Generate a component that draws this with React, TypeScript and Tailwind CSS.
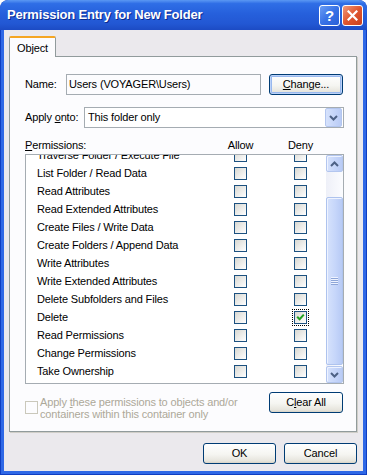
import React from "react";

const rows = [
  "Traverse Folder / Execute File",
  "List Folder / Read Data",
  "Read Attributes",
  "Read Extended Attributes",
  "Create Files / Write Data",
  "Create Folders / Append Data",
  "Write Attributes",
  "Write Extended Attributes",
  "Delete Subfolders and Files",
  "Delete",
  "Read Permissions",
  "Change Permissions",
  "Take Ownership",
];

function Box({ checked = false, focus = false }: { checked?: boolean; focus?: boolean }) {
  return (
    <span
      className={
        "relative flex h-[13px] w-[13px] items-center justify-center border border-[#1c5180] bg-[linear-gradient(135deg,#d8d8d2,#ffffff)] " +
        (focus ? "outline-1 outline-offset-1 outline-dotted outline-black" : "")
      }
    >
      {checked && (
        <svg width="9" height="8" viewBox="0 0 9 8">
          <path d="M1.2 3.8 L3.6 6.2 L7.8 1.6" fill="none" stroke="#21a121" strokeWidth="2" />
        </svg>
      )}
    </span>
  );
}

function XPButton({ children, className = "", def = false }: { children: React.ReactNode; className?: string; def?: boolean }) {
  return (
    <div
      className={
        "flex h-[21px] items-center justify-center rounded-[3px] border border-[#003c74] bg-[linear-gradient(#ffffff,#f5f5f1_55%,#e6e4dc_90%,#d6d2c6)] text-[11px] text-black " +
        (def ? "shadow-[inset_0_0_0_1px_#bcd2f8,inset_0_0_0_2px_#98b8ee] " : "") +
        className
      }
    >
      {children}
    </div>
  );
}

function Chevron({ up = false }: { up?: boolean }) {
  return (
    <svg width="9" height="6" viewBox="0 0 9 6">
      <path
        d={up ? "M1 5 L4.5 1.5 L8 5" : "M1 1 L4.5 4.5 L8 1"}
        fill="none"
        stroke="#4d6185"
        strokeWidth="2"
      />
    </svg>
  );
}

function ScrollBtn({ up = false }: { up?: boolean }) {
  return (
    <div className="flex h-[17px] w-[17px] items-center justify-center rounded-[2px] border border-[#b3c6ef] bg-[linear-gradient(to_right,#d6e2fc,#c4d4f9_60%,#b9cbf5)] shadow-[inset_1px_1px_0_#eef3ff]">
      <Chevron up={up} />
    </div>
  );
}

export default function App() {
  return (
    <div className="flex h-[475px] w-[367px] flex-col overflow-hidden rounded-t-[8px] bg-[#0f3ec2] font-['Liberation_Sans',Arial,sans-serif] text-[11px] tracking-[-0.15px] text-black">
      {/* Title bar */}
      <div className="flex h-[30px] items-center rounded-t-[8px] bg-[linear-gradient(#5b98f3,#2f6ee6_12%,#2660dc_45%,#2257d3_80%,#1c4bc4)] pl-[7px] pr-[4px]">
        <span className="flex-1 text-[13px] font-bold tracking-[-0.2px] text-white [text-shadow:1px_1px_#0b2a8f]">
          Permission Entry for New Folder
        </span>
        <div className="flex h-[21px] w-[21px] items-center justify-center rounded-[3px] border border-white bg-[linear-gradient(135deg,#6a9df4,#3872e6_50%,#2a5fd8)] text-[15px] font-bold leading-none text-white">
          ?
        </div>
        <div className="ml-[2px] flex h-[21px] w-[21px] items-center justify-center rounded-[3px] border border-white bg-[linear-gradient(135deg,#f09a7c,#e0562f_50%,#c8401f)]">
          <svg width="11" height="11" viewBox="0 0 11 11">
            <path d="M1.5 1.5 L9.5 9.5 M9.5 1.5 L1.5 9.5" stroke="white" strokeWidth="2.2" strokeLinecap="square" />
          </svg>
        </div>
      </div>

      {/* Body */}
      <div className="mx-px mb-px flex flex-1 flex-col border-x-[3px] border-b-[3px] border-[#2f68e6] bg-[#ebe9ed] pl-[5px] pt-[6px]">
        {/* Tab row */}
        <div className="flex h-[20px]">
          <div className="relative z-10 flex h-[21px] w-[47px] items-center justify-center rounded-t-[2px] border-x border-[#919b9c] border-t-[2px] border-t-[#f5a623] bg-[#fcfcfe] pt-px">
            Object
          </div>
        </div>

        {/* Panel */}
        <div className="flex h-[376px] w-[348px] flex-col border border-[#919b9c] bg-[#fcfcfe] pl-[15px] pr-[12px] pt-[17px] shadow-[1px_1px_0_#d0cec8]">
          {/* Name row */}
          <div className="flex h-[21px] items-center">
            <span className="w-[41px]">Name:</span>
            <div className="flex h-[21px] w-[195px] items-center border border-[#a5acb2] bg-[#fcfcfe] pl-[2px]">
              Users (VOYAGER\Users)
            </div>
            <XPButton def className="ml-[8px] w-[74px]">
              <span>
                <span className="underline">C</span>hange...
              </span>
            </XPButton>
          </div>

          {/* Apply onto row */}
          <div className="mt-[12px] flex h-[21px] items-center">
            <span className="w-[59px]">
              Apply <span className="underline">o</span>nto:
            </span>
            <div className="flex h-[21px] flex-1 items-center border border-[#a5acb2] bg-white pl-[3px] pr-px">
              <span className="flex-1">This folder only</span>
              <div className="flex h-[19px] w-[17px] items-center justify-center rounded-[2px] border border-[#b3c6ef] bg-[linear-gradient(to_right,#d6e2fc,#c4d4f9_60%,#b9cbf5)]">
                <Chevron />
              </div>
            </div>
          </div>

          {/* Header row */}
          <div className="mt-[11px] flex h-[13px] items-center">
            <span className="w-[195px]">
              <span className="underline">P</span>ermissions:
            </span>
            <span className="w-[41px] text-center">Allow</span>
            <span className="ml-[19px] w-[41px] text-center">Deny</span>
          </div>

          {/* List */}
          <div className="mt-[2px] flex h-[230px] border border-[#a5acb2] bg-white">
            <div className="flex-1 overflow-hidden">
              <div className="-mt-[9px]">
                {rows.map((r) => (
                  <div key={r} className="flex h-[18px] items-center pl-[11px]">
                    <span className="w-[197px] whitespace-nowrap">{r}</span>
                    <Box />
                    <span className="w-[47px]" />
                    <Box checked={r === "Delete"} focus={r === "Delete"} />
                  </div>
                ))}
              </div>
            </div>
            {/* Scrollbar */}
            <div className="flex w-[17px] flex-col bg-[linear-gradient(to_right,#eef0f8,#fbfcff)]">
              <ScrollBtn up />
              <div className="flex flex-1 flex-col pb-px pt-[25px]">
                <div className="flex flex-1 items-center justify-center rounded-[2px] border border-[#aec3ee] bg-[linear-gradient(to_right,#d6e2fc,#c6d6fa_55%,#b7caf5)] shadow-[inset_1px_1px_0_#eef3ff]">
                  <svg width="7" height="8" viewBox="0 0 7 8">
                    <path d="M0 0.5 H7 M0 2.5 H7 M0 4.5 H7 M0 6.5 H7" stroke="#eef3ff" strokeWidth="1" />
                    <path d="M0 1.5 H7 M0 3.5 H7 M0 5.5 H7 M0 7.5 H7" stroke="#8ea6d8" strokeWidth="1" />
                  </svg>
                </div>
              </div>
              <ScrollBtn />
            </div>
          </div>

          {/* Bottom row */}
          <div className="mt-[8px] flex items-start">
            <span className="mt-[9px] block h-[13px] w-[13px] border border-[#cac8bb] bg-[#fcfcfe]" />
            <span className="ml-[2px] mt-[4px] leading-[12px] text-[#aca899]">
              Apply <span className="underline">t</span>hese permissions to objects and/or
              <br />
              containers within this container only
            </span>
            <XPButton className="ml-auto mr-px w-[74px]">
              <span>
                C<span className="underline">l</span>ear All
              </span>
            </XPButton>
          </div>
        </div>

        {/* OK / Cancel */}
        <div className="mt-[11px] flex w-[348px] justify-end gap-[8px]">
          <XPButton className="w-[73px]">OK</XPButton>
          <XPButton className="w-[73px]">Cancel</XPButton>
        </div>
      </div>
    </div>
  );
}
